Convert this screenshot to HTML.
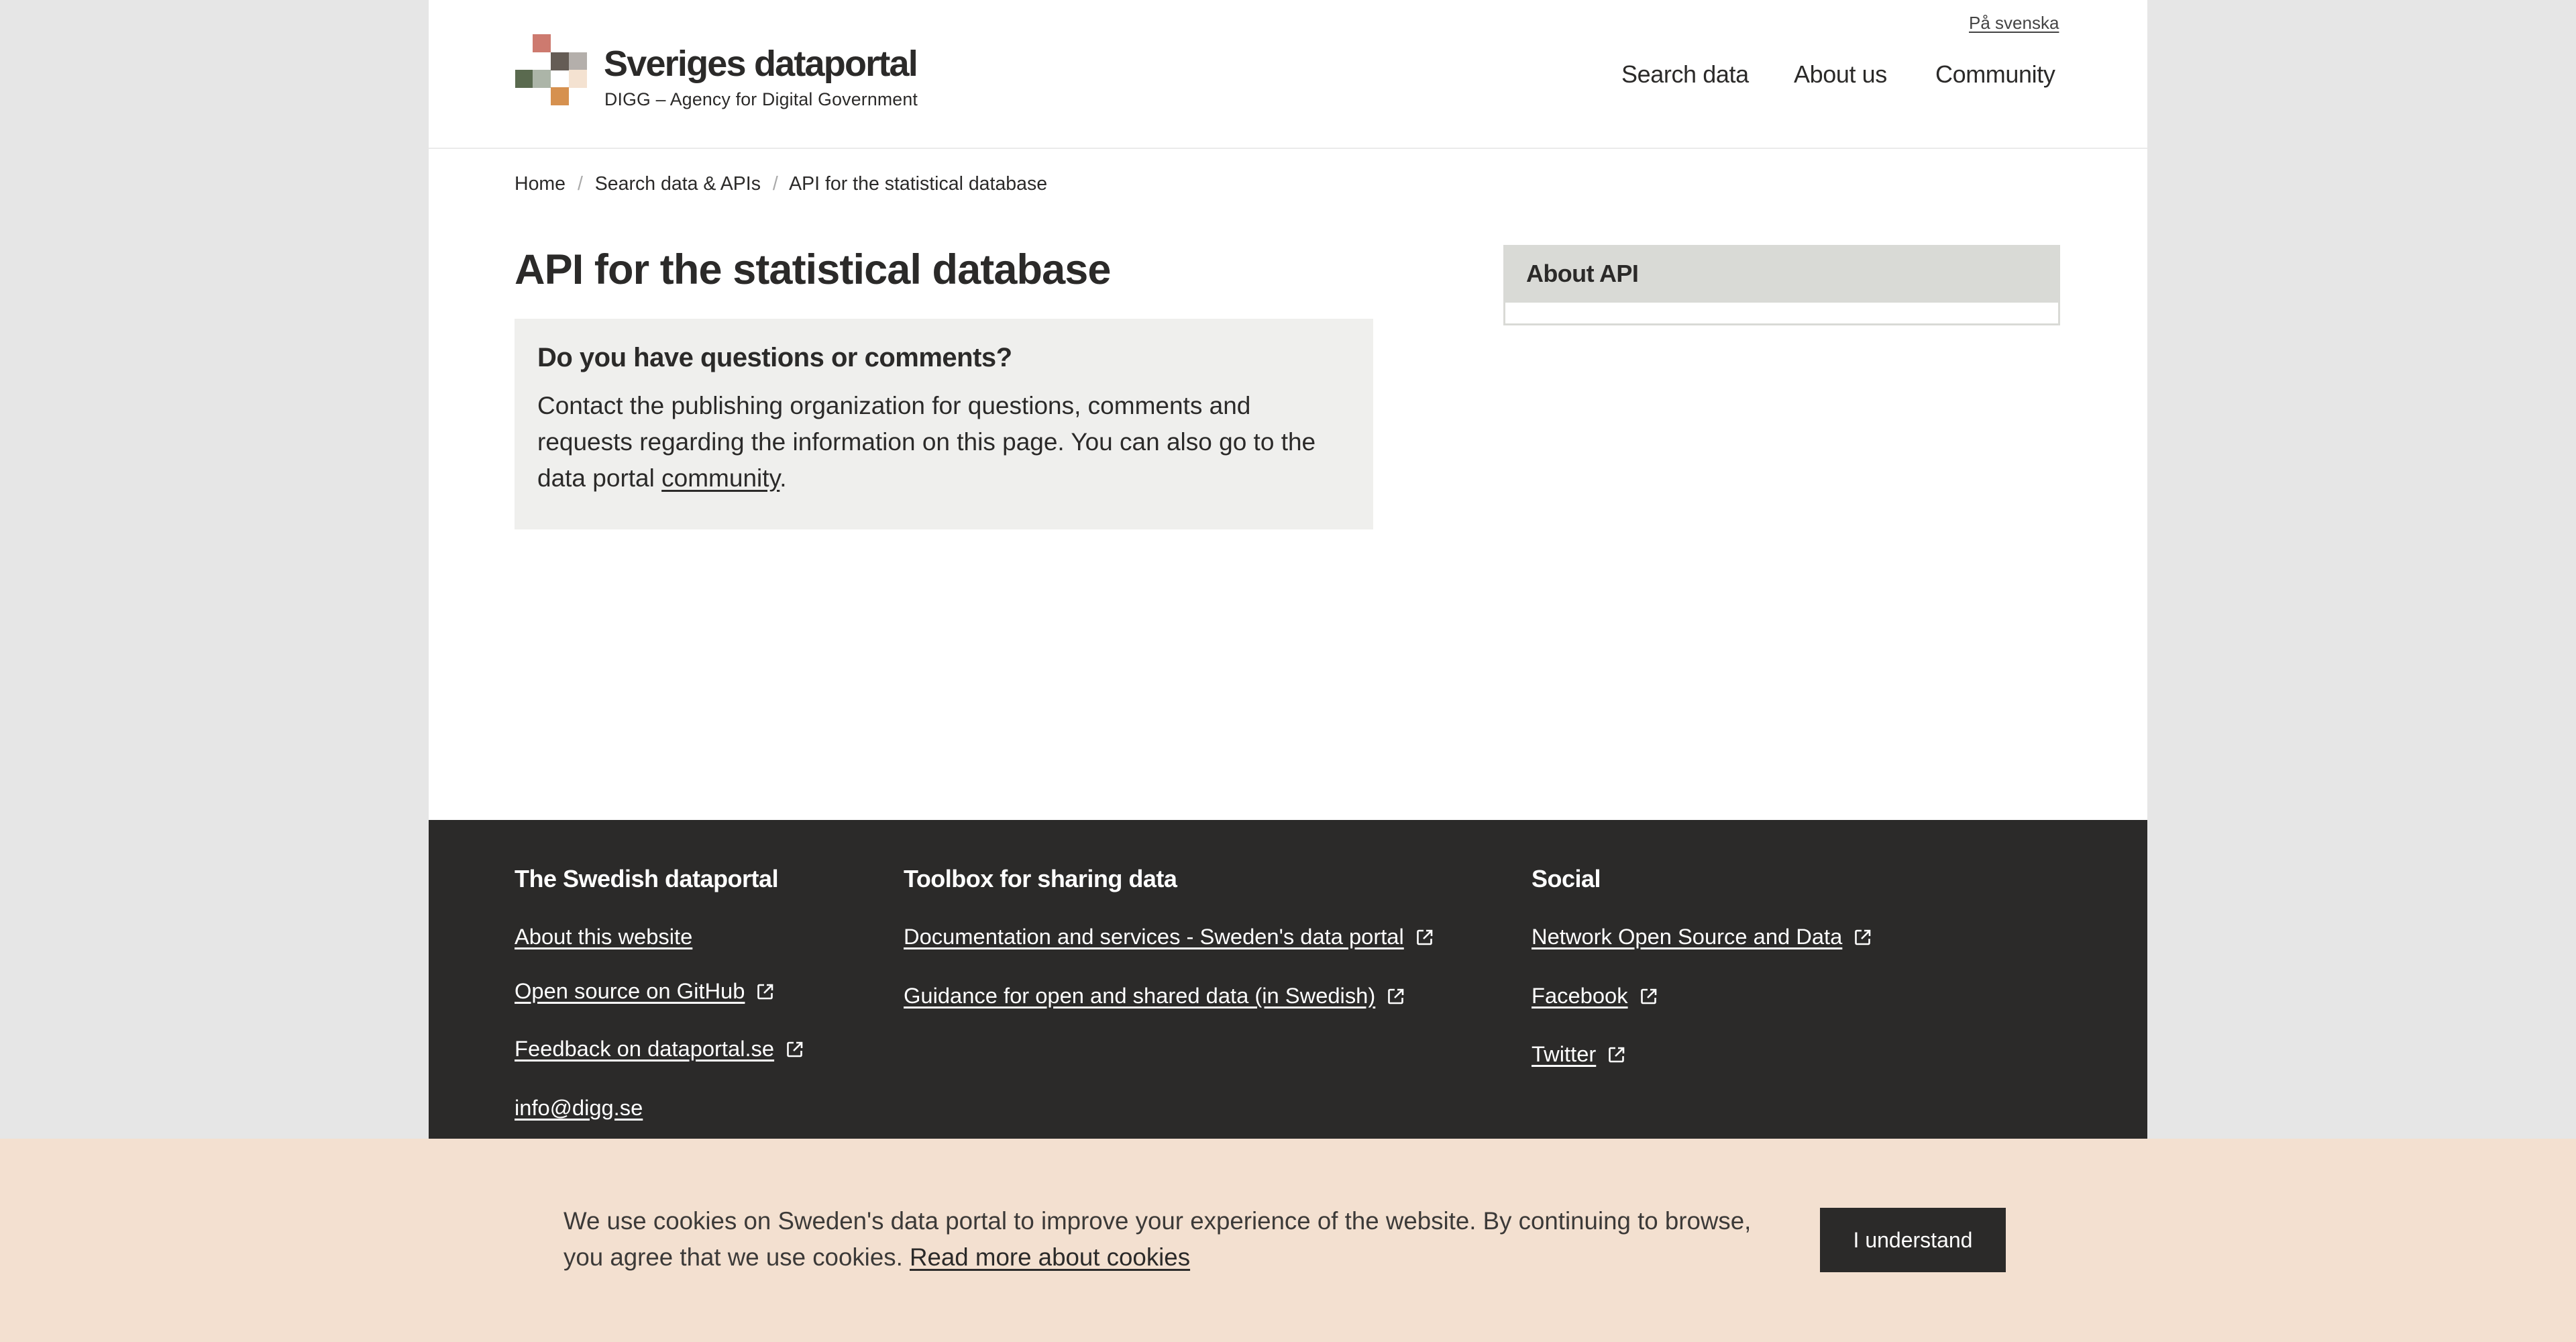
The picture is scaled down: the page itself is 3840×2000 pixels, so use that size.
<!DOCTYPE html>
<html><head><meta charset="utf-8"><style>
*{margin:0;padding:0;box-sizing:border-box}
html,body{width:3840px;height:2000px;overflow:hidden}
body{background:#e6e6e6;font-family:"Liberation Sans",sans-serif;color:#2b2a29;position:relative}
.page{position:absolute;left:639px;top:0;width:2562px;height:1222px;background:#fff}
.abs{position:absolute;white-space:nowrap}
a{color:inherit}
.sq{position:absolute;width:27px;height:27px}
.hdr{position:absolute;left:0;top:220px;width:2562px;height:2px;background:#ebebeb}
.foot{position:absolute;left:639px;top:1222px;width:2562px;height:475px;background:#2b2a29;color:#fff}
.fh{font-weight:bold;font-size:36px;letter-spacing:-0.5px}
.fl{font-size:32.7px;letter-spacing:0}
.fl a{text-decoration:underline;text-underline-offset:5px}
.ext{display:inline-block;width:26px;height:26px;margin-left:18px;vertical-align:-3px}
.cookie{position:absolute;left:0;top:1697px;width:3840px;height:303px;background:#f3e0d0}
</style></head><body>
<div class="page">
  <div class="sq" style="left:155px;top:51px;background:#cd7a6f"></div>
  <div class="sq" style="left:182px;top:78px;background:#655c55"></div>
  <div class="sq" style="left:209px;top:78px;background:#b4afab"></div>
  <div class="sq" style="left:129px;top:104px;background:#5a6a4f"></div>
  <div class="sq" style="left:155px;top:104px;background:#acb5a8"></div>
  <div class="sq" style="left:209px;top:104px;background:#f4e2d1"></div>
  <div class="sq" style="left:182px;top:130px;background:#d6914f"></div>
  <div class="abs" style="left:261px;top:64px;font-size:54px;font-weight:bold;letter-spacing:-1.8px">Sveriges dataportal</div>
  <div class="abs" style="left:262px;top:133px;font-size:26.7px;letter-spacing:0.2px">DIGG – Agency for Digital Government</div>
  <div class="abs" style="left:2296px;top:19px;font-size:26px;text-decoration:underline;text-underline-offset:4px;color:#444">På svenska</div>
  <div class="abs" style="left:1778px;top:90px;font-size:36px;letter-spacing:-0.4px">Search data</div>
  <div class="abs" style="left:2035px;top:90px;font-size:36px;letter-spacing:-0.4px">About us</div>
  <div class="abs" style="left:2246px;top:90px;font-size:36px;letter-spacing:-0.4px">Community</div>
  <div class="hdr"></div>
  <div class="abs" style="left:128px;top:258px;font-size:28.5px;letter-spacing:0"><a>Home</a> <span style="color:#aaa;margin:0 10px">/</span> <a>Search data &amp; APIs</a> <span style="color:#aaa;margin:0 10px">/</span> API for the statistical database</div>
  <div class="abs" style="left:128px;top:366px;font-size:63px;font-weight:bold;letter-spacing:-0.9px">API for the statistical database</div>
  <div style="position:absolute;left:128px;top:475px;width:1280px;height:314px;background:#efefed"></div>
  <div class="abs" style="left:162px;top:511px;font-size:40px;font-weight:bold;letter-spacing:-0.5px">Do you have questions or comments?</div>
  <div class="abs" style="left:162px;top:578px;font-size:37px;line-height:54px;letter-spacing:0">Contact the publishing organization for questions, comments and<br>requests regarding the information on this page. You can also go to the<br>data portal <a style="text-decoration:underline;text-underline-offset:5px">community</a>.</div>
  <div style="position:absolute;left:1602px;top:365px;width:830px;height:120px;border:3px solid #d9dad6;background:#fff"></div>
  <div style="position:absolute;left:1602px;top:365px;width:830px;height:86px;background:#d9dad6"></div>
  <div class="abs" style="left:1636px;top:387px;font-size:36px;font-weight:bold;letter-spacing:-0.6px">About API</div>
</div>
<svg width="0" height="0" style="position:absolute"><defs><symbol id="e" viewBox="0 0 26 26"><path d="M11 3H4a1.5 1.5 0 0 0-1.5 1.5v17A1.5 1.5 0 0 0 4 23h17a1.5 1.5 0 0 0 1.5-1.5V15" fill="none" stroke="#fff" stroke-width="2.6"/><path d="M15 3h8v8M23 3L11 15" fill="none" stroke="#fff" stroke-width="2.6"/></symbol></defs></svg>
<div class="foot">
  <div class="abs fh" style="left:128px;top:67px">The Swedish dataportal</div>
  <div class="abs fl" style="left:128px;top:155px"><a>About this website</a></div>
  <div class="abs fl" style="left:128px;top:236px"><a>Open source on GitHub</a><svg class="ext"><use href="#e"/></svg></div>
  <div class="abs fl" style="left:128px;top:322px"><a>Feedback on dataportal.se</a><svg class="ext"><use href="#e"/></svg></div>
  <div class="abs fl" style="left:128px;top:410px"><a>info@digg.se</a></div>
  <div class="abs fh" style="left:708px;top:67px">Toolbox for sharing data</div>
  <div class="abs fl" style="left:708px;top:155px"><a>Documentation and services - Sweden's data portal</a><svg class="ext"><use href="#e"/></svg></div>
  <div class="abs fl" style="left:708px;top:243px"><a>Guidance for open and shared data (in Swedish)</a><svg class="ext"><use href="#e"/></svg></div>
  <div class="abs fh" style="left:1644px;top:67px">Social</div>
  <div class="abs fl" style="left:1644px;top:155px"><a>Network Open Source and Data</a><svg class="ext"><use href="#e"/></svg></div>
  <div class="abs fl" style="left:1644px;top:243px"><a>Facebook</a><svg class="ext"><use href="#e"/></svg></div>
  <div class="abs fl" style="left:1644px;top:330px"><a>Twitter</a><svg class="ext"><use href="#e"/></svg></div>
</div>
<div class="cookie">
  <div class="abs" style="left:840px;top:96px;font-size:36.7px;line-height:54px;color:#3c3a38;letter-spacing:0">We use cookies on Sweden's data portal to improve your experience of the website. By continuing to browse,<br>you agree that we use cookies. <a style="text-decoration:underline;text-underline-offset:5px;color:#2b2a29">Read more about cookies</a></div>
  <div style="position:absolute;left:2713px;top:103px;width:277px;height:96px;background:#2b2a29;color:#fff;font-size:32px;line-height:96px;text-align:center">I understand</div>
</div>
</body></html>
